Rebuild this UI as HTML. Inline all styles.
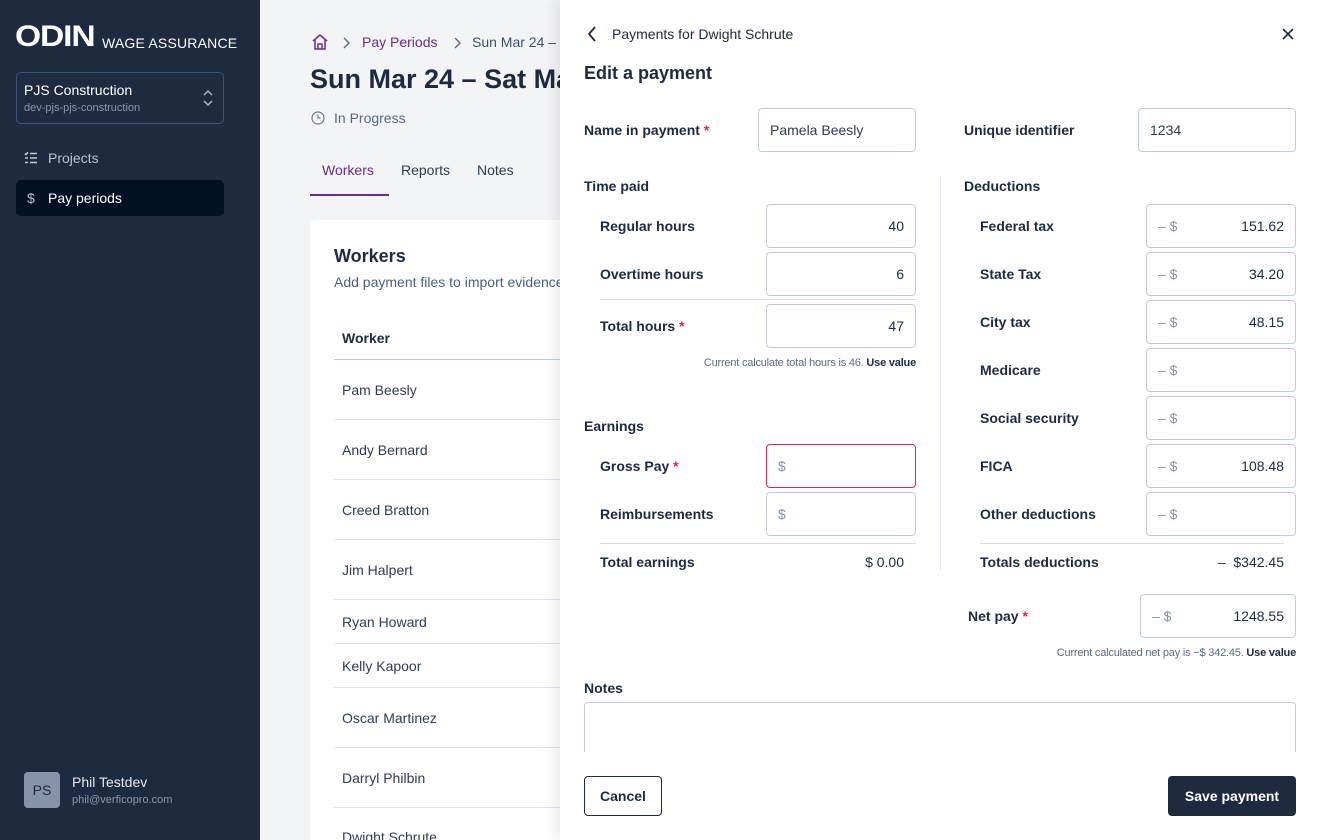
<!DOCTYPE html>
<html><head><meta charset="utf-8"><style>
*{box-sizing:border-box;margin:0;padding:0}
html{width:1320px;height:840px;overflow:hidden}
body{width:1320px;height:840px;overflow:hidden;position:relative;font-family:"Liberation Sans",sans-serif;background:#f3f4f6;color:#1d2a40}
.a{position:absolute;white-space:nowrap}
#side{position:absolute;left:0;top:0;width:260px;height:840px;background:#1d2a40;color:#fff}
#panel{position:absolute;left:560px;top:0;width:760px;height:840px;background:#fff;box-shadow:-6px 0 12px rgba(0,0,0,.08)}
.lb{font-size:14px;font-weight:bold;color:#1d2a40}
.in{position:absolute;border:1px solid #c3cbd8;border-radius:4px;background:#fff;font-size:14px;color:#1d2a40}
.in .v{position:absolute;right:11px;top:13px}
.in .p{position:absolute;left:11px;top:13px;color:#8592a8}
.st{color:#e0244f}
.hr{position:absolute;height:1px;background:#d6dce5}
.row{position:absolute;left:334px;width:240px;height:1px;background:#dde2ea}
.nm{position:absolute;left:342px;font-size:14px;color:#2f3b52}
</style></head><body>
<div id="side">
 <div class="a" style="left:15px;top:20px;font-size:30px;font-weight:900;letter-spacing:-1px;transform:scaleX(1.12);transform-origin:left">ODIN</div>
 <div class="a" style="left:102px;top:35px;font-size:14px;letter-spacing:0.2px">WAGE ASSURANCE</div>
 <div style="position:absolute;left:16px;top:72px;width:208px;height:52px;border:1px solid #3f5577;border-radius:5px"></div>
 <div class="a" style="left:24px;top:82px;font-size:14px">PJS Construction</div>
 <div class="a" style="left:24px;top:102px;font-size:11px;color:#8a97ad">dev-pjs-pjs-construction</div>
 <svg class="a" style="left:201px;top:89px" width="14" height="18" viewBox="0 0 14 18" fill="none" stroke="#a9b4c6" stroke-width="1.5"><path d="M3 6l4-4 4 4M3 12l4 4 4-4"/></svg>
 <svg class="a" style="left:24px;top:151px" width="14" height="14" viewBox="0 0 14 14" fill="none" stroke="#c4ccd8" stroke-width="1.6"><path d="M1 2.5l1 1 2-2M6 2.5h7M1 7h3M6 7h7M1 11.5h3M6 11.5h7"/></svg>
 <div class="a" style="left:48px;top:150px;font-size:14px;color:#b8c2d2">Projects</div>
 <div style="position:absolute;left:16px;top:180px;width:208px;height:36px;background:#021026;border-radius:5px"></div>
 <div class="a" style="left:27px;top:190px;font-size:14px;color:#b8c2d2">$</div>
 <div class="a" style="left:48px;top:190px;font-size:14px">Pay periods</div>
 <div style="position:absolute;left:24px;top:772px;width:36px;height:36px;background:#8593ab;border-radius:4px;color:#1d2a40;font-size:14px;text-align:center;line-height:36px">PS</div>
 <div class="a" style="left:72px;top:774px;font-size:14px;color:#e6eaf0">Phil Testdev</div>
 <div class="a" style="left:72px;top:794px;font-size:11px;color:#8a97ad">phil@verficopro.com</div>
</div>

<svg class="a" style="left:311px;top:33px" width="18" height="18" viewBox="0 0 18 18" fill="none" stroke="#6a2c91" stroke-width="1.5"><path d="M2 8l7-6 7 6M4 7v9h10V7M7 16v-5h4v5"/></svg>
<svg class="a" style="left:342px;top:37px" width="8" height="12" viewBox="0 0 8 12" fill="none" stroke="#5b6a82" stroke-width="1.4"><path d="M2 1l5 5-5 5"/></svg>
<div class="a" style="left:362px;top:34px;font-size:14px;color:#6a2c91">Pay Periods</div>
<svg class="a" style="left:453px;top:37px" width="8" height="12" viewBox="0 0 8 12" fill="none" stroke="#5b6a82" stroke-width="1.4"><path d="M2 1l5 5-5 5"/></svg>
<div class="a" style="left:472px;top:34px;font-size:14px;color:#3f4f6a">Sun Mar 24 –</div>
<div class="a" style="left:310px;top:64px;font-size:27px;font-weight:bold;color:#1d2a40">Sun Mar 24 – Sat Mar 30</div>
<svg class="a" style="left:311px;top:111px" width="14" height="14" viewBox="0 0 14 14" fill="none" stroke="#6b7890" stroke-width="1.2"><circle cx="7" cy="7" r="6"/><path d="M7 3.5V7h2.5"/></svg>
<div class="a" style="left:334px;top:110px;font-size:14px;color:#5b6a82">In Progress</div>
<div class="a" style="left:322px;top:162px;font-size:14px;color:#6a2c91">Workers</div>
<div style="position:absolute;left:310px;top:194px;width:79px;height:2px;background:#6a2c91"></div>
<div class="a" style="left:401px;top:162px;font-size:14px;color:#2f3b52">Reports</div>
<div class="a" style="left:477px;top:162px;font-size:14px;color:#2f3b52">Notes</div>
<div style="position:absolute;left:310px;top:220px;width:300px;height:620px;background:#fff;border-radius:6px 6px 0 0"></div>
<div class="a" style="left:334px;top:246px;font-size:18px;font-weight:bold">Workers</div>
<div class="a" style="left:334px;top:274px;font-size:14px;color:#4a5f80">Add payment files to import evidence</div>
<div class="a" style="left:342px;top:330px;font-size:14px;font-weight:bold">Worker</div>
<div class="row" style="top:359px;background:#c3cbd8"></div>
<div class="nm" style="top:382px">Pam Beesly</div><div class="row" style="top:419px"></div>
<div class="nm" style="top:442px">Andy Bernard</div><div class="row" style="top:479px"></div>
<div class="nm" style="top:502px">Creed Bratton</div><div class="row" style="top:539px"></div>
<div class="nm" style="top:562px">Jim Halpert</div><div class="row" style="top:599px"></div>
<div class="nm" style="top:614px">Ryan Howard</div><div class="row" style="top:643px"></div>
<div class="nm" style="top:658px">Kelly Kapoor</div><div class="row" style="top:687px"></div>
<div class="nm" style="top:710px">Oscar Martinez</div><div class="row" style="top:747px"></div>
<div class="nm" style="top:770px">Darryl Philbin</div><div class="row" style="top:807px"></div>
<div class="nm" style="top:829px">Dwight Schrute</div>

<div id="panel"></div>
<svg class="a" style="left:586px;top:26px" width="12" height="16" viewBox="0 0 12 16" fill="none" stroke="#1d2a40" stroke-width="1.8"><path d="M9 1L3 8l6 7"/></svg>
<div class="a" style="left:612px;top:26px;font-size:14px">Payments for Dwight Schrute</div>
<svg class="a" style="left:1281px;top:27px" width="14" height="14" viewBox="0 0 14 14" fill="none" stroke="#1d2a40" stroke-width="1.6"><path d="M2 2l10 10M12 2L2 12"/></svg>
<div class="a" style="left:584px;top:63px;font-size:18px;font-weight:bold">Edit a payment</div>

<div class="a lb" style="left:584px;top:122px">Name in payment <span class="st">*</span></div>
<div class="in" style="left:758px;top:108px;width:158px;height:44px"><span class="p" style="color:#2f3b52">Pamela Beesly</span></div>
<div class="a lb" style="left:964px;top:122px">Unique identifier</div>
<div class="in" style="left:1138px;top:108px;width:158px;height:44px"><span class="p" style="color:#2f3b52">1234</span></div>

<div class="a lb" style="left:584px;top:178px">Time paid</div>
<div class="a lb" style="left:600px;top:218px">Regular hours</div>
<div class="in" style="left:766px;top:204px;width:150px;height:44px"><span class="v">40</span></div>
<div class="a lb" style="left:600px;top:266px">Overtime hours</div>
<div class="in" style="left:766px;top:252px;width:150px;height:44px"><span class="v">6</span></div>
<div class="hr" style="left:600px;top:299px;width:316px"></div>
<div class="a lb" style="left:600px;top:318px">Total hours <span class="st">*</span></div>
<div class="in" style="left:766px;top:304px;width:150px;height:44px"><span class="v">47</span></div>
<div class="a" style="right:404px;top:357px;font-size:11px;color:#5b6a82;letter-spacing:-0.2px">Current calculate total hours is 46. <b style="color:#1d2a40">Use value</b></div>

<div class="a lb" style="left:584px;top:418px">Earnings</div>
<div class="a lb" style="left:600px;top:458px">Gross Pay <span class="st">*</span></div>
<div class="in" style="left:766px;top:444px;width:150px;height:44px;border-color:#e0244f"><span class="p">$</span></div>
<div class="a lb" style="left:600px;top:506px">Reimbursements</div>
<div class="in" style="left:766px;top:492px;width:150px;height:44px"><span class="p">$</span></div>
<div class="hr" style="left:600px;top:543px;width:316px"></div>
<div class="a lb" style="left:600px;top:554px">Total earnings</div>
<div class="a" style="right:416px;top:554px;font-size:14px">$ 0.00</div>

<div style="position:absolute;left:940px;top:176px;width:1px;height:394px;background:#dde2ea"></div>

<div class="a lb" style="left:964px;top:178px">Deductions</div>
<div class="a lb" style="left:980px;top:218px">Federal tax</div>
<div class="in" style="left:1146px;top:204px;width:150px;height:44px"><span class="p">– $</span><span class="v">151.62</span></div>
<div class="a lb" style="left:980px;top:266px">State Tax</div>
<div class="in" style="left:1146px;top:252px;width:150px;height:44px"><span class="p">– $</span><span class="v">34.20</span></div>
<div class="a lb" style="left:980px;top:314px">City tax</div>
<div class="in" style="left:1146px;top:300px;width:150px;height:44px"><span class="p">– $</span><span class="v">48.15</span></div>
<div class="a lb" style="left:980px;top:362px">Medicare</div>
<div class="in" style="left:1146px;top:348px;width:150px;height:44px"><span class="p">– $</span></div>
<div class="a lb" style="left:980px;top:410px">Social security</div>
<div class="in" style="left:1146px;top:396px;width:150px;height:44px"><span class="p">– $</span></div>
<div class="a lb" style="left:980px;top:458px">FICA</div>
<div class="in" style="left:1146px;top:444px;width:150px;height:44px"><span class="p">– $</span><span class="v">108.48</span></div>
<div class="a lb" style="left:980px;top:506px">Other deductions</div>
<div class="in" style="left:1146px;top:492px;width:150px;height:44px"><span class="p">– $</span></div>
<div class="hr" style="left:980px;top:543px;width:304px"></div>
<div class="a lb" style="left:980px;top:554px">Totals deductions</div>
<div class="a" style="right:36px;top:554px;font-size:14px">–&nbsp; $342.45</div>

<div class="a lb" style="left:968px;top:608px">Net pay <span class="st">*</span></div>
<div class="in" style="left:1140px;top:594px;width:156px;height:44px"><span class="p">– $</span><span class="v">1248.55</span></div>
<div class="a" style="right:24px;top:647px;font-size:11px;color:#5b6a82;letter-spacing:-0.2px">Current calculated net pay is −$ 342.45. <b style="color:#1d2a40">Use value</b></div>

<div class="a lb" style="left:584px;top:680px">Notes</div>
<div style="position:absolute;left:584px;top:702px;width:712px;height:50px;border:1px solid #c3cbd8;border-bottom:none;border-radius:4px 4px 0 0"></div>

<div style="position:absolute;left:584px;top:776px;width:78px;height:40px;border:1px solid #1d2a40;border-radius:4px;font-size:14px;font-weight:bold;text-align:center;line-height:38px">Cancel</div>
<div style="position:absolute;left:1168px;top:776px;width:128px;height:40px;background:#1d2a40;border-radius:4px;color:#fff;font-size:14px;font-weight:bold;text-align:center;line-height:40px">Save payment</div>
</body></html>
